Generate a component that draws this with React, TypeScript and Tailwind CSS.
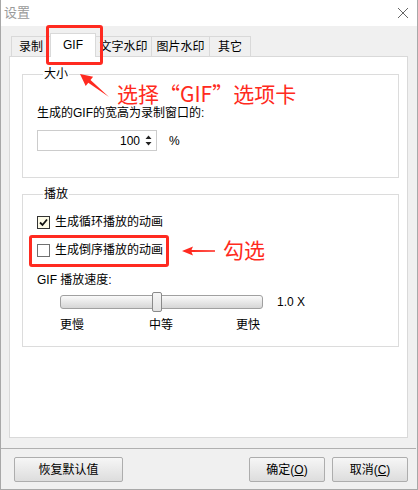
import React from "react";

const font = "font-['Liberation_Sans','Noto_Sans_CJK_SC',sans-serif]";

const tabs = [
  { label: "录制", w: "w-[40px]" },
  { label: "GIF", w: "w-[46px]", active: true },
  { label: "文字水印", w: "w-[57px]" },
  { label: "图片水印", w: "w-[59px]" },
  { label: "其它", w: "w-[42px]" },
];

const Button = ({ children, w }: { children: React.ReactNode; w: string }) => (
  <button
    className={`${w} h-[25px] border border-[#adadad] rounded-[2px] bg-gradient-to-b from-[#f6f6f6] to-[#dddddd] text-xs text-black`}
  >
    {children}
  </button>
);

const Checkbox = ({ checked, label }: { checked?: boolean; label: string }) => (
  <div className="flex items-center h-4 gap-[5px]">
    <span
      className={`w-[13px] h-[13px] border flex items-center justify-center ${
        checked ? "border-[#333333] bg-[#fdfbe8]" : "border-[#707070] bg-white"
      }`}
    >
      {checked && (
        <svg width="9" height="9" viewBox="0 0 9 9">
          <path d="M1 4.5 L3.5 7 L8 1.5" stroke="#111" strokeWidth="1.8" fill="none" />
        </svg>
      )}
    </span>
    <span>{label}</span>
  </div>
);

export default function App() {
  return (
    <div
      className={`${font} relative w-[418px] h-[490px] bg-[#f0f0f0] border border-[#a8a8a8] border-t-0 text-xs text-black overflow-hidden flex flex-col`}
    >
      {/* title bar */}
      <div className="h-[26px] bg-white flex items-center justify-between pl-[3px] pr-[8px] shrink-0">
        <span className="text-[#9a9a9a] text-[13px]">设置</span>
        <svg width="12" height="12" viewBox="0 0 12 12">
          <path d="M1 1 L11 11 M11 1 L1 11" stroke="#666" strokeWidth="1" />
        </svg>
      </div>

      {/* body */}
      <div className="flex flex-col pl-2 pr-[9px] pt-[7px]">
        <div className="flex items-end pl-[2px] h-[24px]">
          {tabs.map((t) =>
            t.active ? (
              <div
                key={t.label}
                className={`${t.w} h-[24px] -ml-px border border-b-0 border-[#d9d9d9] bg-white relative z-10 flex items-start justify-center pt-[3px]`}
              >
                {t.label}
              </div>
            ) : (
              <div
                key={t.label}
                className={`${t.w} h-[21px] -ml-px first:ml-0 border border-b-0 border-[#d9d9d9] bg-[#f0f0f0] flex items-center justify-center`}
              >
                {t.label}
              </div>
            )
          )}
        </div>

        {/* panel */}
        <div className="-mt-px h-[382px] border border-[#d9d9d9] bg-white pl-3 pr-2 pt-[9px]">
          <fieldset className="border border-[#dcdcdc] pl-[14px] pb-[26px]">
            <legend className="ml-[6px] px-px leading-4">大小</legend>
            <div className="mt-[23px] leading-4">生成的GIF的宽高为录制窗口的:</div>
            <div className="mt-[9px] flex items-center gap-[12px]">
              <div className="w-[120px] h-[21px] border border-[#cccccc] flex items-center justify-end pr-[4px] gap-[5px]">
                <span>100</span>
                <svg width="7" height="11" viewBox="0 0 7 11">
                  <path d="M3.5 0.5 L6.5 4 L0.5 4 Z M0.5 7 L6.5 7 L3.5 10.5 Z" fill="#222" />
                </svg>
              </div>
              <span>%</span>
            </div>
          </fieldset>

          <fieldset className="mt-2 border border-[#dcdcdc] pl-[14px] pb-[13px]">
            <legend className="ml-[6px] px-px leading-4">播放</legend>
            <div className="mt-[12px] flex flex-col gap-[12px]">
              <Checkbox checked label="生成循环播放的动画" />
              <Checkbox label="生成倒序播放的动画" />
            </div>
            <div className="mt-[14px] leading-4">GIF 播放速度:</div>
            <div className="mt-[4px] flex items-center">
              <div className="ml-[23px] w-[203px] h-[20px] flex items-center relative">
                <div className="w-full h-[14px] rounded-[3px] border border-[#a0a0a0] bg-gradient-to-b from-[#fafafa] to-[#d6d6d6]" />
                <div className="absolute left-[92px] top-0 w-[10px] h-[20px] rounded-[2px] border border-[#8a8a8a] bg-gradient-to-b from-[#f6f6f6] to-[#e2e2e2]" />
              </div>
              <span className="ml-[14px]">1.0 X</span>
            </div>
            <div className="mt-[5px] flex leading-4">
              <span className="ml-[23px] w-[89px]">更慢</span>
              <span className="w-[87px]">中等</span>
              <span>更快</span>
            </div>
          </fieldset>
        </div>

        <div className="mt-[10px] -mx-[8px] h-px bg-[#b0b0b0]" />

        <div className="mt-[8px] flex items-center pl-[5px]">
          <Button w="w-[109px]">恢复默认值</Button>
          <div className="ml-auto flex gap-[7px] pr-[-1px]">
            <Button w="w-[76px]">
              确定(<span className="underline">O</span>)
            </Button>
            <Button w="w-[76px]">
              取消(<span className="underline">C</span>)
            </Button>
          </div>
        </div>
      </div>

      {/* annotations */}
      <div className="absolute left-[45px] top-[25px] w-[57px] h-[40px] border-[3px] border-[#ff2a20] rounded-[3px] z-20" />
      <svg className="absolute left-[76px] top-[70px] z-20" width="36" height="30" viewBox="0 0 36 30">
        <polygon points="3,4 16.1,6.7 13.5,10 32,27 11.3,12.8 8.7,16.1" fill="#ff2a20" />
      </svg>
      <div className="absolute left-[116px] top-[79px] text-[21px] leading-[28px] text-[#ff2a20] z-20 font-['Noto_Sans_CJK_SC',sans-serif]">
        选择“GIF”选项卡
      </div>
      <div className="absolute left-[28px] top-[235px] w-[140px] h-[32px] border-[3px] border-[#ff2a20] rounded-[3px] z-20" />
      <svg className="absolute left-[180px] top-[245px] z-20" width="36" height="12" viewBox="0 0 36 12">
        <polygon points="1,6 12,1.5 10.5,5 34,5.2 34,6.8 10.5,7 12,10.5" fill="#ff2a20" />
      </svg>
      <div className="absolute left-[222px] top-[235px] text-[21px] leading-[28px] text-[#ff2a20] z-20 font-['Noto_Sans_CJK_SC',sans-serif]">
        勾选
      </div>
    </div>
  );
}
